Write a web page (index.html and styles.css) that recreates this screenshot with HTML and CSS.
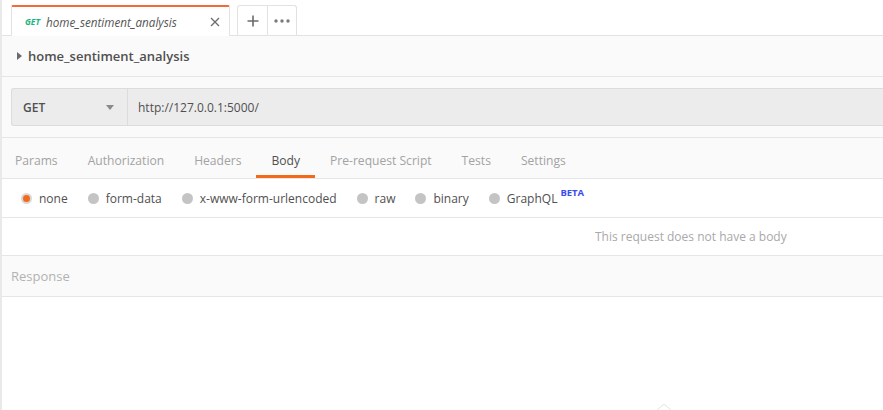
FILE: index.html
```html
<!DOCTYPE html>
<html>
<head>
<meta charset="utf-8">
<link rel="stylesheet" href="styles.css">
</head>
<body>
<div class="app">
  <div class="tabbar">
    <div class="tab">
      <span class="tab-method">GET</span>
      <span class="tab-name">home_sentiment_analysis</span>
      <svg class="tab-close" width="10" height="10" viewBox="0 0 10 10"><path d="M1 1L9 9M9 1L1 9" stroke="#6b6b6b" stroke-width="1.3"/></svg>
    </div>
    <div class="tab-actions">
      <div class="tab-btn"><svg width="12" height="12" viewBox="0 0 12 12"><path d="M6 0.5V11.5M0.5 6H11.5" stroke="#6b6b6b" stroke-width="1.6"/></svg></div>
      <div class="tab-btn"><svg width="16" height="4" viewBox="0 0 16 4"><circle cx="2" cy="2" r="1.7" fill="#7a7a7a"/><circle cx="8" cy="2" r="1.7" fill="#7a7a7a"/><circle cx="14" cy="2" r="1.7" fill="#7a7a7a"/></svg></div>
    </div>
  </div>
  <div class="name-row">
    <svg class="caret-right" width="5" height="8" viewBox="0 0 5 8"><path d="M0 0L5 4L0 8Z" fill="#6b6b6b"/></svg>
    <span class="req-name">home_sentiment_analysis</span>
  </div>
  <div class="url-row">
    <div class="url-box">
      <div class="method">
        <span>GET</span>
        <svg width="8" height="5" viewBox="0 0 8 5"><path d="M0 0H8L4 5Z" fill="#8a8a8a"/></svg>
      </div>
      <div class="url">http://127.0.0.1:5000/</div>
    </div>
  </div>
  <div class="req-tabs">
    <div class="req-tab">Params</div>
    <div class="req-tab">Authorization</div>
    <div class="req-tab">Headers</div>
    <div class="req-tab active">Body</div>
    <div class="req-tab">Pre-request Script</div>
    <div class="req-tab">Tests</div>
    <div class="req-tab">Settings</div>
  </div>
  <div class="body-types">
    <div class="radio selected"><span class="dot"></span>none</div>
    <div class="radio"><span class="dot"></span>form-data</div>
    <div class="radio"><span class="dot"></span>x-www-form-urlencoded</div>
    <div class="radio"><span class="dot"></span>raw</div>
    <div class="radio"><span class="dot"></span>binary</div>
    <div class="radio"><span class="dot"></span>GraphQL<sup class="beta">BETA</sup></div>
  </div>
  <div class="no-body">This request does not have a body</div>
  <div class="response">Response</div>
  <div class="response-body">
    <svg class="ghost" width="14" height="6" viewBox="0 0 14 6"><path d="M0 6L7 0L14 6" fill="none" stroke="#ececec" stroke-width="1.2"/></svg>
  </div>
</div>
</body>
</html>
```

FILE: styles.css
```css
* { box-sizing: border-box; }
html, body { margin: 0; padding: 0; background: #fff; }
body {
  font-family: "Open Sans", "DejaVu Sans", sans-serif;
  color: #505050;
  width: 883px;
  height: 410px;
  overflow: hidden;
}
.app {
  height: 410px;
  border-left: 2px solid #e9e9e9;
  display: flex;
  flex-direction: column;
}
.tabbar {
  height: 36px;
  border-bottom: 1px solid #e2e2e2;
  display: flex;
  align-items: flex-end;
  padding-left: 9px;
  background: #fff;
}
.tab {
  width: 219px;
  height: 31px;
  margin-bottom: -1px;
  background: #fff;
  border-top: 2px solid #f26b3a;
  border-left: 1px solid #e2e2e2;
  border-right: 1px solid #e2e2e2;
  border-radius: 2px 2px 0 0;
  display: flex;
  align-items: center;
  padding: 0 8px 0 13px;
}
.tab-method {
  font-size: 8.5px;
  font-weight: 700;
  font-style: italic;
  color: #1db380;
  margin-right: 6px;
}
.tab-name {
  font-size: 11.7px;
  font-style: italic;
  color: #555;
  flex: 1;
}
.tab-close { margin-right: 1px; }
.tab-actions {
  margin-left: 7px;
  height: 30px;
  display: flex;
  border: 1px solid #e2e2e2;
  border-bottom: none;
  border-radius: 3px 3px 0 0;
}
.tab-btn {
  width: 29px;
  display: flex;
  align-items: center;
  justify-content: center;
}
.tab-btn + .tab-btn { border-left: 1px solid #e2e2e2; }
.name-row {
  height: 41px;
  background: #fafafa;
  border-bottom: 1px solid #e6e6e6;
  display: flex;
  align-items: center;
  padding-left: 15px;
}
.caret-right { margin-right: 6px; }
.req-name {
  font-size: 13px;
  font-weight: 600;
  color: #505050;
}
.url-row {
  height: 61px;
  padding: 11px 0 11px 9px;
  border-bottom: 1px solid #e6e6e6;
  background: #fafafa;
}
.url-box {
  height: 38px;
  background: #ececec;
  border: 1px solid #dcdcdc;
  border-right: none;
  border-radius: 3px 0 0 3px;
  display: flex;
  margin-right: -4px;
}
.method {
  width: 116px;
  border-right: 1px solid #dcdcdc;
  display: flex;
  align-items: center;
  justify-content: space-between;
  padding: 0 13px 0 11px;
  font-size: 12px;
  font-weight: 600;
  color: #505050;
}
.url {
  display: flex;
  align-items: center;
  padding-left: 10px;
  font-size: 12px;
  color: #505050;
}
.req-tabs {
  height: 41px;
  background: #fafafa;
  border-bottom: 1px solid #e6e6e6;
  display: flex;
}
.req-tab {
  padding: 7px 15px 0;
  display: flex;
  align-items: center;
  font-size: 12.1px;
  color: #a3a3a3;
  border-bottom: 3px solid transparent;
}
.req-tab:first-child { padding-left: 13px; }
.req-tab.active {
  color: #505050;
  border-bottom-color: #f26b1d;
}
.body-types {
  height: 39px;
  border-bottom: 1px solid #e6e6e6;
  display: flex;
  align-items: center;
  padding-left: 19px;
  background: #fff;
}
.radio {
  display: flex;
  align-items: center;
  font-size: 12px;
  color: #505050;
  margin-right: 20px;
}
.dot {
  width: 11px;
  height: 11px;
  border-radius: 50%;
  background: #c4c4c4;
  margin-right: 7px;
}
.radio.selected .dot {
  background: #f26b1d;
  border: 2px solid #d8d8d8;
}
.beta {
  font-size: 9.5px;
  font-weight: 700;
  color: #3b4cf0;
  align-self: flex-start;
  margin-top: -4px;
  margin-left: 3px;
}
.no-body {
  height: 38px;
  border-bottom: 1px solid #e6e6e6;
  display: flex;
  align-items: center;
  padding-left: 593px;
  font-size: 12px;
  color: #a9a9a9;
}
.response {
  height: 41px;
  background: #fafafa;
  border-bottom: 1px solid #e6e6e6;
  display: flex;
  align-items: center;
  padding-left: 9px;
  font-size: 13px;
  color: #b2b2b2;
}
.response-body {
  flex: 1;
  position: relative;
}
.ghost {
  position: absolute;
  left: 655px;
  top: 107px;
}
```
